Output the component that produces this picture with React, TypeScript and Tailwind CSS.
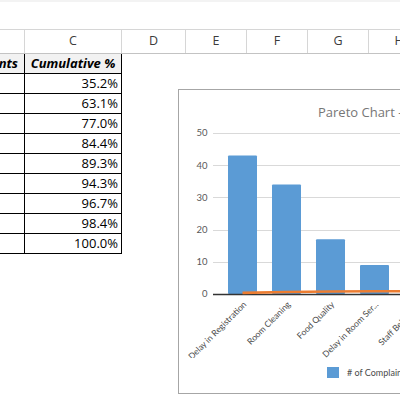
import React from "react";

const cols = [
  { key: "B", w: "w-[25px]", label: "" },
  { key: "C", w: "w-[97px]", label: "C" },
  { key: "D", w: "w-[64px]", label: "D" },
  { key: "E", w: "w-[61px]", label: "E" },
  { key: "F", w: "w-[61px]", label: "F" },
  { key: "G", w: "w-[61px]", label: "G" },
  { key: "H", w: "w-[61px]", label: "H" },
];

const cumulative = ["35.2%", "63.1%", "77.0%", "84.4%", "89.3%", "94.3%", "96.7%", "98.4%", "100.0%"];

const complaints = [
  { name: "Delay in Registration", count: 43, cum: 0.352 },
  { name: "Room Cleaning", count: 34, cum: 0.631 },
  { name: "Food Quality", count: 17, cum: 0.77 },
  { name: "Delay in Room Ser...", count: 9, cum: 0.844 },
  { name: "Staff Behaviour", count: 6, cum: 0.893 },
  { name: "Noise", count: 6, cum: 0.943 },
  { name: "Parking", count: 3, cum: 0.967 },
  { name: "Wi-Fi", count: 2, cum: 0.984 },
  { name: "Other", count: 2, cum: 1 },
];

const ZERO = 172;
const UNIT = 3.22;
const yOf = (v: number) => ZERO - v * UNIT;

const ColumnHeaders = () => (
  <div className="flex h-[25px] border-t border-b border-t-[#d6d6d6] border-b-[#c3c3c3] bg-white">
    {cols.map((c) => (
      <div
        key={c.key}
        className={`${c.w} shrink-0 flex items-center justify-center border-r border-[#d6d6d6] text-[12.5px] text-[#3c3c3c]`}
      >
        {c.label}
      </div>
    ))}
  </div>
);

const Table = () => (
  <div className="flex flex-col w-[122px] shrink-0 text-[13px] text-black">
    <div className="flex h-[20px] border-b border-black bg-[#f2f2f2] font-bold italic">
      <div className="w-[25px] border-r border-black overflow-hidden flex justify-end items-center pr-[6px]">
        <span className="whitespace-nowrap">#&nbsp;of&nbsp;Complaints</span>
      </div>
      <div className="w-[97px] border-r border-black flex items-center justify-center whitespace-nowrap">
        Cumulative %
      </div>
    </div>
    {cumulative.map((v) => (
      <div key={v} className="flex h-[20px] border-b border-black">
        <div className="w-[25px] border-r border-black" />
        <div className="w-[97px] border-r border-black flex items-center justify-end pr-[3px]">{v}</div>
      </div>
    ))}
  </div>
);

const Chart = () => {
  const ticks = [0, 10, 20, 30, 40, 50];
  const pts = complaints.map((c, i) => `${63.5 + 44 * i},${yOf(c.cum).toFixed(2)}`).join(" ");
  return (
    <div
      className="ml-[56px] mt-[35px] w-[330px] h-[305px] shrink-0 border border-[#a6a6a6] bg-white flex flex-col"
      style={{ fontFamily: 'Lato, "Open Sans", sans-serif' }}
    >
      <div
        className="h-[32px] pt-[12px] pl-[139px] text-[13px] leading-[20px] text-[#767676] whitespace-nowrap"
        style={{ fontFamily: '"Open Sans", sans-serif' }}
      >
        Pareto Chart - Hotel Complaints
      </div>
      <svg width="328" height="236" className="block">
        {ticks.map((t) => (
          <g key={t}>
            {t > 0 && <line x1="34" x2="328" y1={Math.round(yOf(t)) + 0.5} y2={Math.round(yOf(t)) + 0.5} stroke="#d9d9d9" />}
            <text x="28.5" y={yOf(t) + 3.3} textAnchor="end" fontSize="9.5" fill="#595959">
              {t}
            </text>
          </g>
        ))}
        {complaints.map((c, i) => (
          <rect key={c.name} x={49 + 44 * i} y={yOf(c.count)} width="29" height={c.count * UNIT} rx="1" fill="#5b9bd5" />
        ))}
        <line x1="34" x2="328" y1="172.5" y2="172.5" stroke="#333" strokeWidth="1.3" />
        <polyline points={pts} fill="none" stroke="#ed7d31" strokeWidth="2.6" />
        {complaints.map((c, i) => (
          <text
            key={c.name}
            transform={`translate(${68 + 44 * i},183) rotate(-45)`}
            textAnchor="end"
            fontSize="8.6"
            fill="#4a4a4a"
          >
            {c.name}
          </text>
        ))}
      </svg>
      <div className="flex items-center pl-[148px] pt-[8px]">
        <div className="w-[12px] h-[11px] bg-[#5b9bd5]" />
        <span className="ml-[8px] text-[9px] text-[#4a4a4a] whitespace-nowrap"># of Complaints</span>
      </div>
    </div>
  );
};

export default function App() {
  return (
    <div className="w-[400px] h-[412px] overflow-hidden bg-white" style={{ fontFamily: '"Open Sans", sans-serif' }}>
      <div className="h-[2px] bg-[#f3f3f3]" />
      <div className="h-[27px]" />
      <ColumnHeaders />
      <div className="flex items-start">
        <Table />
        <Chart />
      </div>
    </div>
  );
}
